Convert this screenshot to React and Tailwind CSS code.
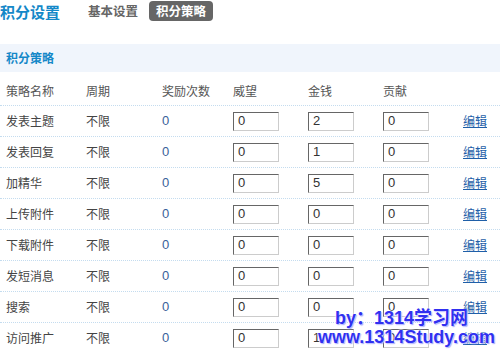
import React from "react";

const rows = [
  ["发表主题", "0", "2", "0"],
  ["发表回复", "0", "1", "0"],
  ["加精华", "0", "5", "0"],
  ["上传附件", "0", "0", "0"],
  ["下载附件", "0", "0", "0"],
  ["发短消息", "0", "0", "0"],
  ["搜索", "0", "0", "0"],
  ["访问推广", "0", "1", "0"],
];

function Inp({ v }) {
  return (
    <div className="w-[46px] h-[19px] border border-t-[#666] border-l-[#666] border-b-[#ccc] border-r-[#ccc] bg-white pl-[4px] flex items-center text-[13px] text-[#333] font-['Liberation_Sans',sans-serif]">
      {v}
    </div>
  );
}

const grid = "grid grid-cols-[80px_76px_71px_75px_75px_80px_1fr] pl-[6px]";

export default function App() {
  return (
    <div className="relative w-[500px] h-[349px] overflow-hidden bg-white text-[12px] text-[#444] font-['Noto_Sans_CJK_SC',sans-serif]">
      <div className="flex items-center h-[22px]">
        <div className="text-[15px] font-bold text-[#1488c8] leading-none">积分设置</div>
        <div className="ml-[28px] text-[12.5px] font-bold text-[#666] leading-none">基本设置</div>
        <div className="ml-[11px] h-[20px] px-[7px] flex items-center rounded-[4px] bg-[#666] text-white text-[12.5px] font-bold leading-none">积分策略</div>
      </div>
      <div className="mt-[22px] h-[28px] bg-[#f0f5fc] flex items-center pl-[6px] text-[12px] font-bold text-[#1488c8]">积分策略</div>
      <div className={`${grid} h-[34px] items-center pt-[4px] border-b border-dotted border-[#c4dcef] text-[#555]`}>
        <div>策略名称</div>
        <div>周期</div>
        <div>奖励次数</div>
        <div>威望</div>
        <div>金钱</div>
        <div>贡献</div>
        <div></div>
      </div>
      {rows.map((r, i) => (
        <div key={i} className={`${grid} h-[31px] items-center border-b border-dotted border-[#c4dcef]`}>
          <div>{r[0]}</div>
          <div>不限</div>
          <div className="text-[#3a5f9a] font-['Liberation_Sans',sans-serif] text-[13px]">0</div>
          <Inp v={r[1]} />
          <Inp v={r[2]} />
          <Inp v={r[3]} />
          <a className="text-[#1f5fa8] underline cursor-pointer">编辑</a>
        </div>
      ))}
      <div className="absolute left-[335px] top-[308px] text-[18px] leading-[20px] font-bold text-[#3030f0] font-['Liberation_Sans','Noto_Sans_CJK_SC',sans-serif] [text-shadow:0_0_2px_#fff,0_0_2px_#fff,1px_1px_1px_#8888ff]">
        by：1314学习网
      </div>
      <div className="absolute left-[318px] top-[327px] text-[18px] leading-[20px] font-bold text-[#3030f0] font-['Liberation_Sans',sans-serif] [text-shadow:0_0_2px_#fff,0_0_2px_#fff,1px_1px_1px_#8888ff]">
        www.1314Study.com
      </div>
    </div>
  );
}
